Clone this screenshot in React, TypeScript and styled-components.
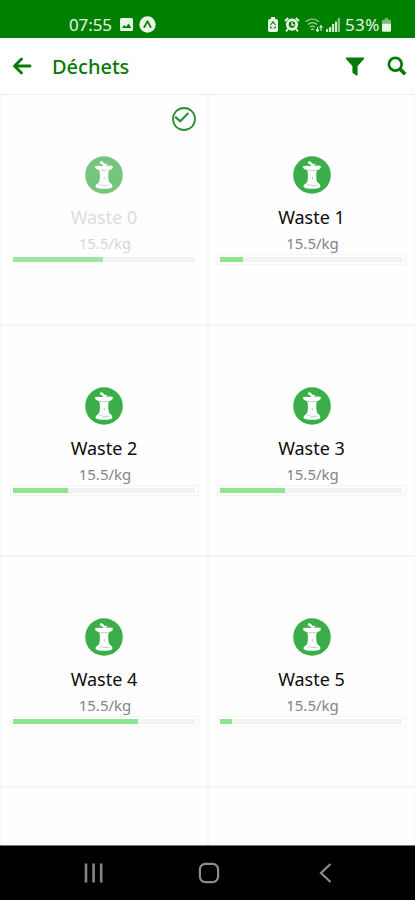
import React from "react";
import styled, { createGlobalStyle } from "styled-components";

const GlobalStyle = createGlobalStyle`
  * { box-sizing: border-box; }
  body { margin: 0; background: #fff; font-family: "Noto Sans", "Open Sans", sans-serif; }
`;

const Screen = styled.div`
  width: 415px;
  height: 900px;
  display: flex;
  flex-direction: column;
  overflow: hidden;
  background: #fefefe;
`;

const StatusBar = styled.div`
  flex: none;
  height: 38px;
  padding: 10px 24px 0 69px;
  display: flex;
  justify-content: space-between;
  background: #008000;
  color: #e4f5e1;
`;

const StatusGroup = styled.div`
  display: flex;
  align-items: center;
  height: 29px;
`;

const StatusText = styled.span<{ $width: number; $gap?: number; $spacing?: number }>`
  width: ${(p) => p.$width}px;
  margin-left: ${(p) => p.$gap ?? 0}px;
  font-size: 17px;
  line-height: 29px;
  letter-spacing: ${(p) => p.$spacing ?? 0}px;
  white-space: nowrap;
`;

const StatusIcon = styled.svg<{ $gap: number }>`
  flex: none;
  display: block;
  margin-left: ${(p) => p.$gap}px;
`;

const Header = styled.header`
  flex: none;
  height: 56px;
  display: flex;
  align-items: center;
  padding: 0 8px 0 12px;
  background: #fff;
  color: #047a08;
`;

const Title = styled.h1`
  flex: 1;
  margin: 1px 0 0 20px;
  font-size: 20px;
  line-height: 28px;
  font-weight: 500;
`;

const IconButton = styled.button<{ $gap?: number }>`
  border: 0;
  padding: 0;
  background: none;
  color: inherit;
  display: flex;
  margin-left: ${(p) => p.$gap ?? 0}px;
`;

const Grid = styled.main`
  flex: 1;
  min-height: 0;
  overflow: hidden;
  display: grid;
  grid-template-columns: 208px 207px;
  grid-auto-rows: 231px;
  border-top: 1px solid #eee;
`;

const Cell = styled.article`
  position: relative;
  display: flex;
  flex-direction: column;
  align-items: center;
  padding-top: 61px;
  border-left: 1px solid #f6f6f6;
  border-right: 1px solid #f6f6f6;
  border-bottom: 2px solid #f4f4f4;
`;

const CellBody = styled.div`
  width: 100%;
  display: flex;
  flex-direction: column;
  align-items: center;
`;

const Badge = styled.svg<{ $faded: boolean }>`
  display: block;
  opacity: ${(p) => (p.$faded ? 0.7 : 1)};
`;

const Name = styled.div<{ $faded: boolean }>`
  margin-top: 9px;
  font-size: 18px;
  line-height: 28px;
  color: ${(p) => (p.$faded ? "#dcdcdc" : "#0c0c0c")};
`;

const Price = styled.div<{ $faded: boolean }>`
  font-size: 15px;
  line-height: 22px;
  margin: 1px 0 0 2px;
  color: ${(p) => (p.$faded ? "#d6d6d6" : "#858585")};
`;

const ProgressFrame = styled.div<{ $faded: boolean }>`
  width: 189px;
  height: 11px;
  padding: 2px 3px 2px 2px;
  border: 1px solid ${(p) => (p.$faded ? "#fcfcfc" : "#f4f4f4")};
`;

const Track = styled.div`
  height: 5px;
  background: #f2f2f2;
`;

const Fill = styled.div<{ $faded: boolean }>`
  height: 5px;
  background: ${(p) => (p.$faded ? "#a0e5a0" : "#8de58f")};
`;

const CheckMark = styled.svg`
  position: absolute;
  left: 170px;
  top: 11px;
`;

const NavBar = styled.nav`
  flex: none;
  height: 55px;
  display: flex;
  align-items: center;
  background: #000;
  border-top: 1px solid #777;
`;

const NavIcon = styled.svg<{ $gap: number }>`
  margin-left: ${(p) => p.$gap}px;
`;

const wastes = [
  { name: "Waste 0", fill: 90, done: true },
  { name: "Waste 1", fill: 23, done: false },
  { name: "Waste 2", fill: 55, done: false },
  { name: "Waste 3", fill: 65, done: false },
  { name: "Waste 4", fill: 125, done: false },
  { name: "Waste 5", fill: 12, done: false },
];

function AppleCore({ faded }: { faded: boolean }) {
  return (
    <Badge $faded={faded} width="38" height="38" viewBox="0 0 38 38">
      <circle cx="19" cy="19" r="18.8" fill="#3cae49" />
      <path
        d="M18.3 10.2C17.8 8.6 16.6 8 14.6 7.2L15.8 5C17.8 5.8 19.2 6.6 19.8 8L22.6 7.8C21.8 9.4 20.9 9.9 20 10.1C23 9.3 26.6 9.4 28 10.4C27.8 12.7 26 13.6 23.8 14.2C22.9 18 23 22.2 24.2 26.1C25.8 27.4 27.4 28.7 27.4 30.4C27 32.2 23.7 32.8 19 32.8C14.3 32.8 10.8 32.2 10.5 30.5C10.5 28.7 12.6 27.4 14.1 26.2C15.2 22.4 15.2 18 14.3 14.2C11.8 13.6 10 12.8 9.8 10.6C11.6 9.4 15.6 9.6 18.3 10.2Z"
        fill="#fff"
      />
      <path d="M14.6 14.2Q19 15.6 23.6 14.2M13.6 29.2Q15.5 28 17.2 29T21 29.5T24.6 29.4" fill="none" stroke="#8fd096" strokeWidth="0.7" />
      <path d="M19.2 20.4Q20.9 22.3 19.2 23.6Q18 22 19.2 20.4Z" fill="#8fd096" />
    </Badge>
  );
}

function WasteCell({ name, fill, done }: { name: string; fill: number; done: boolean }) {
  return (
    <Cell>
      {done && (
        <CheckMark width="26" height="26" viewBox="0 0 26 26" fill="none" stroke="#2c8f35">
          <circle cx="13" cy="13" r="11" strokeWidth="1.8" />
          <path d="M4.2 10.8L9.2 15.2L17.4 7" strokeWidth="2.2" />
        </CheckMark>
      )}
      <CellBody>
        <AppleCore faded={done} />
        <Name $faded={done}>{name}</Name>
        <Price $faded={done}>15.5/kg</Price>
        <ProgressFrame $faded={done}>
          <Track>
            <Fill $faded={done} style={{ width: fill }} />
          </Track>
        </ProgressFrame>
      </CellBody>
    </Cell>
  );
}

export default function App() {
  return (
    <Screen>
      <GlobalStyle />
      <StatusBar>
        <StatusGroup>
          <StatusText $width={44} $spacing={-0.1}>07:55</StatusText>
          <StatusIcon $gap={7} width="13" height="13" viewBox="0 0 13 13">
            <rect width="13" height="13" rx="1.5" fill="#e8f7e6" />
            <path d="M2 10L4.3 7L6 8.8L8.6 5.5L11.3 10Z" fill="#008000" />
          </StatusIcon>
          <StatusIcon $gap={6} width="17" height="17" viewBox="0 0 17 17">
            <circle cx="8.5" cy="8.5" r="8.2" fill="#e8f7e6" />
            <path d="M4.8 11.7C6.6 9.8 7.3 6.6 8.5 5.3C9.7 6.6 10.4 9.8 12.2 11.7" fill="none" stroke="#167f16" strokeWidth="1.8" />
          </StatusIcon>
        </StatusGroup>
        <StatusGroup>
          <StatusIcon $gap={0} width="10" height="15" viewBox="0 0 10 15">
            <path d="M3 0H7V2H8.5Q10 2 10 4V13Q10 15 8.5 15H1.5Q0 15 0 13V4Q0 2 1.5 2H3Z" fill="#e8f7e6" />
            <path d="M2.6 8L5 4.8L7.4 8M2.2 9.3L3 11H4.3M7.8 9.3L7 11H5.6" fill="none" stroke="#168316" strokeWidth="1.2" />
          </StatusIcon>
          <StatusIcon $gap={6} width="16" height="15" viewBox="0 0 16 15">
            <circle cx="8" cy="7.6" r="4.7" fill="none" stroke="#e8f7e6" strokeWidth="2.8" />
            <path d="M1 4L4.2 1M15 4L11.8 1M4 12L2 14.3M12 12L14 14.3" stroke="#e8f7e6" strokeWidth="1.8" />
            <path d="M8 5V8H10.5" fill="none" stroke="#e8f7e6" strokeWidth="1.3" />
          </StatusIcon>
          <StatusIcon $gap={5} width="18" height="15" viewBox="0 0 18 15" fill="none" stroke="#a5d6a0">
            <path d="M.7 4.8Q7.2-.8 14 4.8M2.8 7.5Q7.4 3.6 12 7.5M5 10.1Q7.4 8 9.8 10.1" strokeWidth="1.2" />
            <path d="M7.4 11L9.4 13H5.4Z" fill="#a5d6a0" stroke="none" />
            <path d="M12.5 10V14M11 12.5L12.5 14.4L14 12.5M16 14V9M14.6 10.5L16 8.7L17.4 10.5" stroke="#e0f3dd" strokeWidth="1.1" />
          </StatusIcon>
          <StatusIcon $gap={3} width="14" height="14" viewBox="0 0 14 14" fill="#c9e8c5">
            <path d="M0 14V11H2.2V14ZM3 14V9H5.2V14ZM6 14V6H8.2V14ZM9 14V3.5H11.2V14Z" />
            <path d="M11.8 14V0H14V14Z" opacity=".65" />
          </StatusIcon>
          <StatusText $width={35} $gap={5} $spacing={0.4}>53%</StatusText>
          <StatusIcon $gap={2} width="9" height="14" viewBox="0 0 10 15">
            <path d="M3 0H7V2H10V7H0V2H3Z" fill="#79bd75" />
            <path d="M0 6H10V13.5Q10 15 8.5 15H1.5Q0 15 0 13.5Z" fill="#e8f7e6" />
          </StatusIcon>
        </StatusGroup>
      </StatusBar>
      <Header>
        <IconButton aria-label="Retour">
          <svg width="20" height="18" viewBox="0 0 20 18" fill="none" stroke="currentColor" strokeWidth="2.8" strokeLinecap="round" strokeLinejoin="round">
            <path d="M18 9H3M9.5 2L2.5 9L9.5 16" />
          </svg>
        </IconButton>
        <Title>Déchets</Title>
        <IconButton aria-label="Filtrer">
          <svg width="20" height="19" viewBox="0 0 20 19" fill="currentColor">
            <path d="M1.4.5H18.6Q19.7.8 19 2L12.6 9V18Q12 19 11 18.2L7.8 16Q7.4 15.6 7.4 15V9L1 2Q.3.8 1.4.5Z" />
          </svg>
        </IconButton>
        <IconButton $gap={22} aria-label="Rechercher">
          <svg width="20" height="20" viewBox="0 0 20 20" fill="none" stroke="currentColor">
            <circle cx="8.3" cy="8.3" r="6.4" strokeWidth="2.7" />
            <path d="M13 13L18.2 18.2" strokeWidth="3.6" />
          </svg>
        </IconButton>
      </Header>
      <Grid>
        {wastes.map((waste) => (
          <WasteCell key={waste.name} {...waste} />
        ))}
        <Cell />
        <Cell />
      </Grid>
      <NavBar>
        <NavIcon $gap={84} width="20" height="20" viewBox="0 0 20 20" fill="none" stroke="#858585" strokeWidth="2.6">
          <path d="M2 .5V19.5M9.6 .5V19.5M17.2 .5V19.5" />
        </NavIcon>
        <NavIcon $gap={94} width="22" height="22" viewBox="0 0 22 22" fill="none" stroke="#8c8c8c" strokeWidth="2.2">
          <rect x="1.9" y="1.9" width="18.2" height="18.2" rx="5.5" />
        </NavIcon>
        <NavIcon $gap={99} width="13" height="20" viewBox="0 0 13 20" fill="none" stroke="#8c8c8c" strokeWidth="2.2">
          <path d="M11.5 1L2 10L11.5 19" />
        </NavIcon>
      </NavBar>
    </Screen>
  );
}
